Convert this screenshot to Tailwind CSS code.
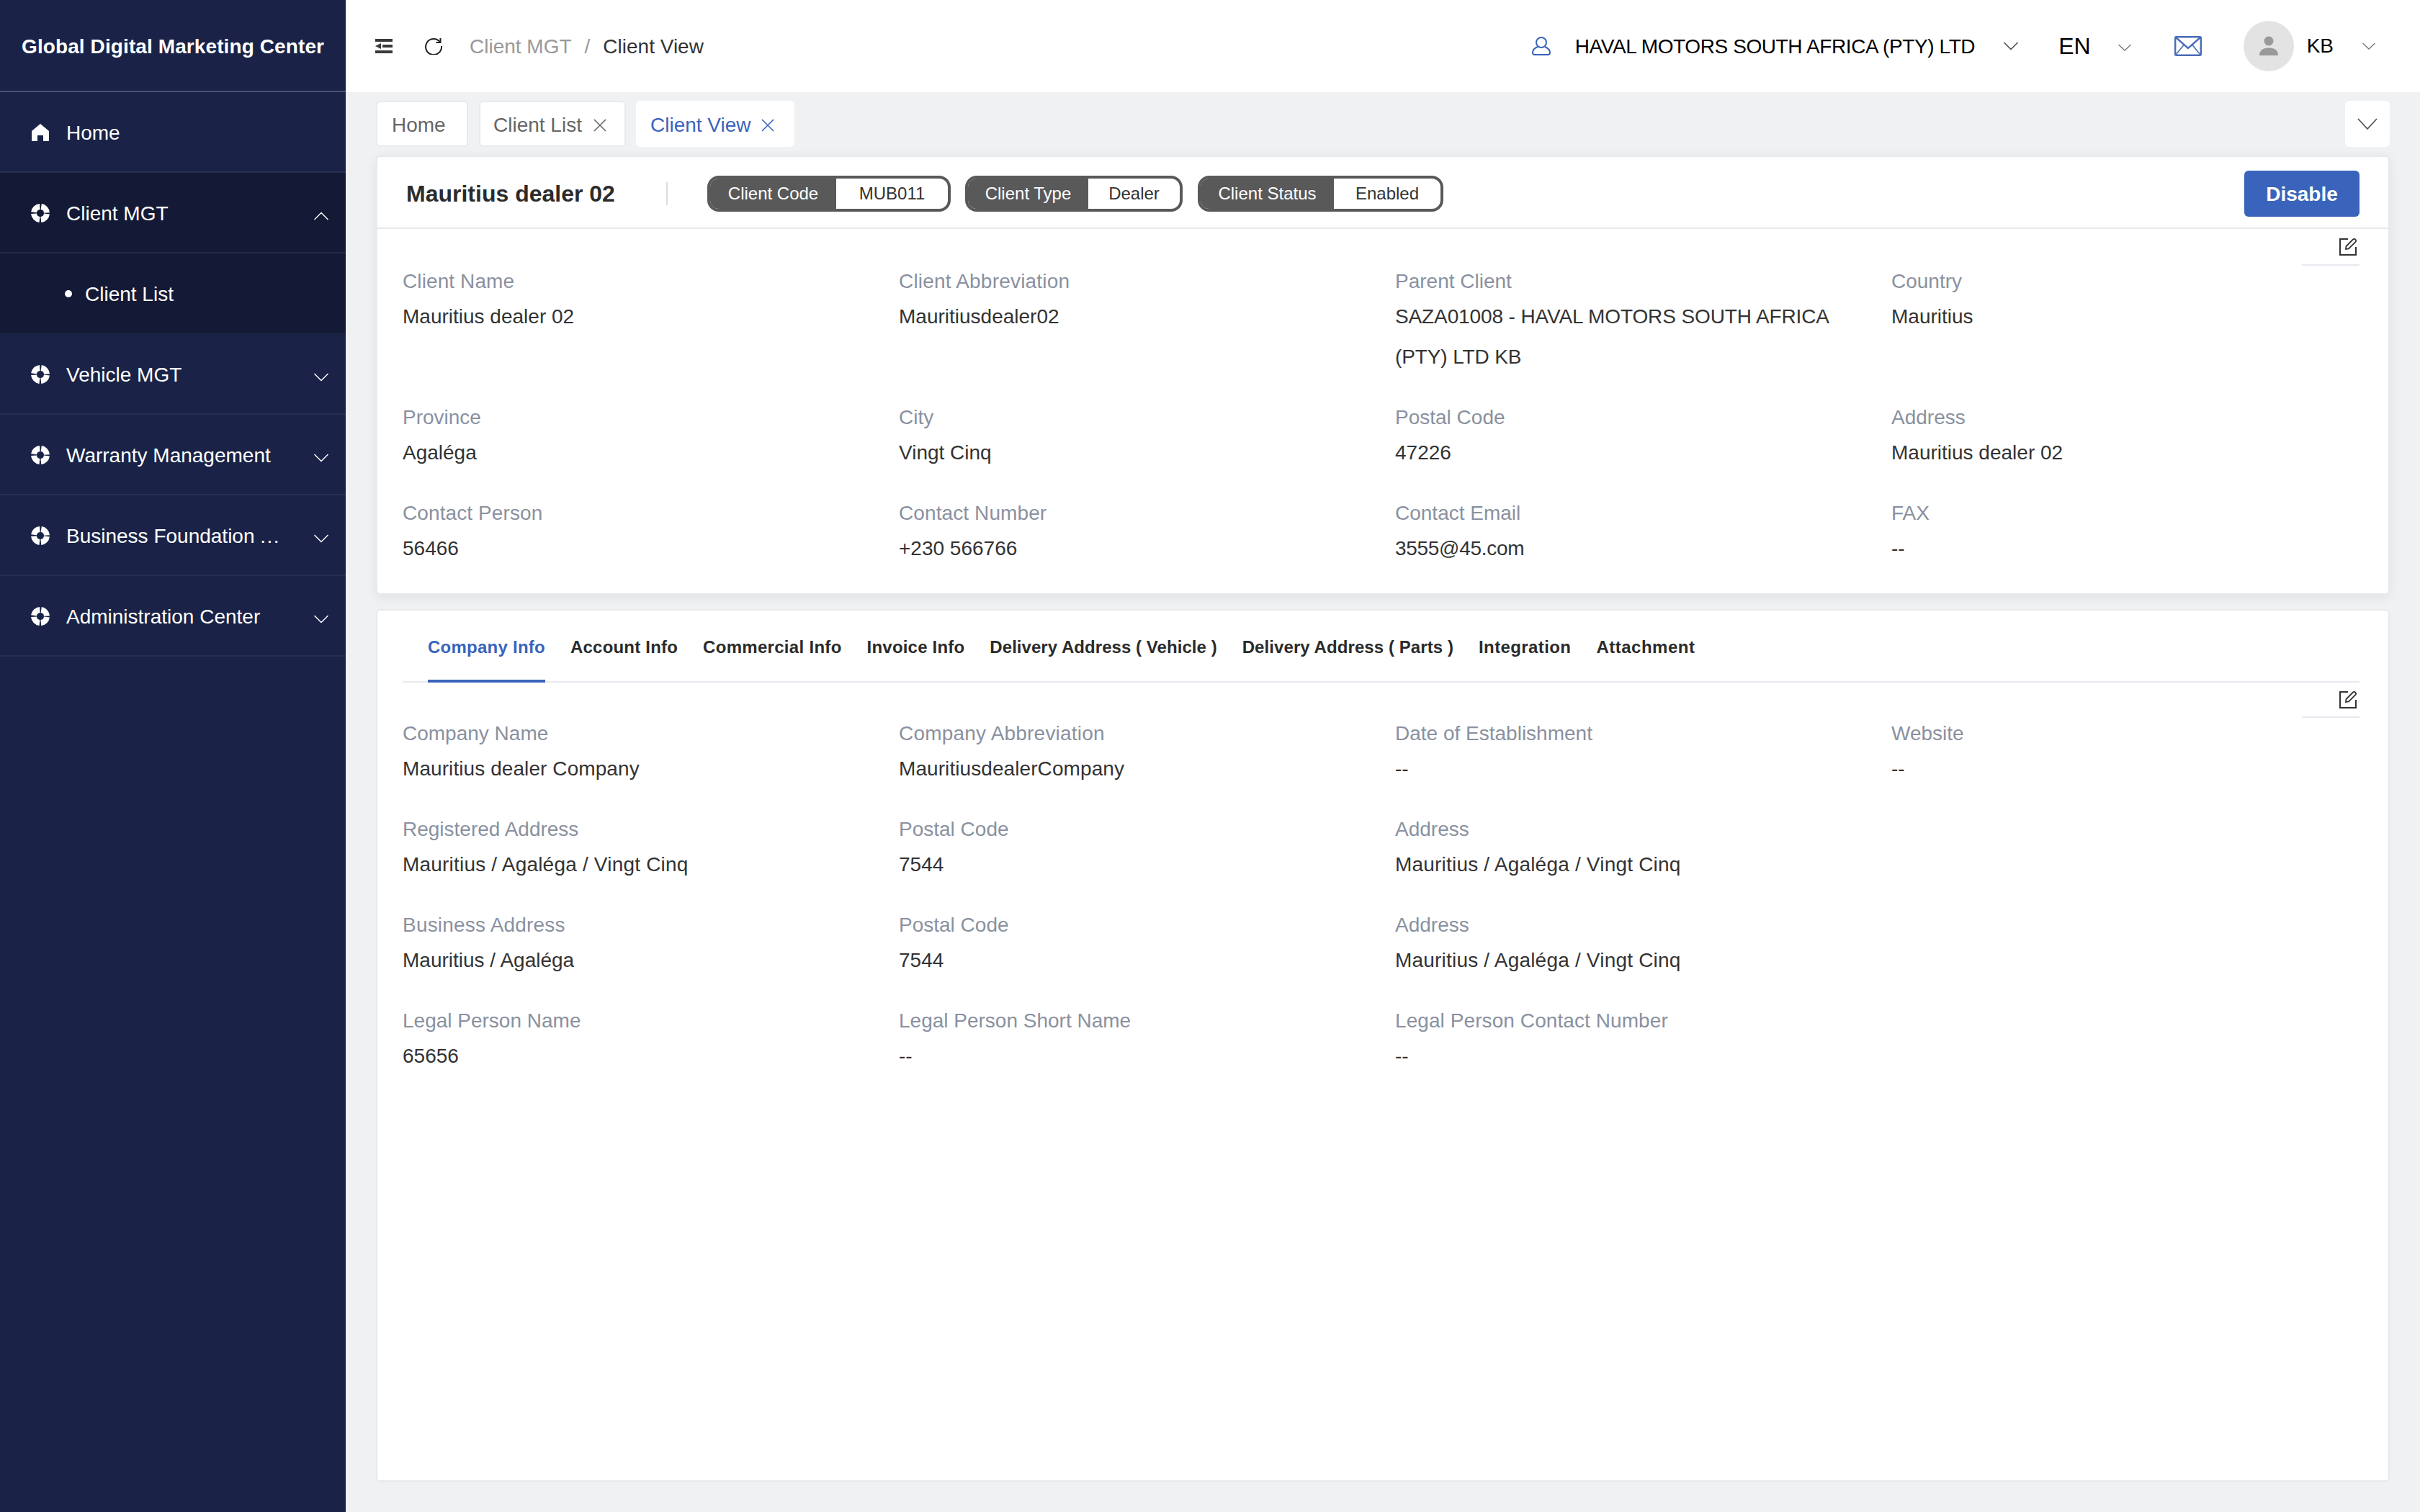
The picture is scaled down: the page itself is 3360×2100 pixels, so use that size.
<!DOCTYPE html>
<html lang="en">
<head>
    <meta charset="UTF-8">
    <title>Client View</title>
    <script src="https://cdn.jsdelivr.net/npm/@tailwindcss/browser@4"></script>
</head>
<body class="w-[3360px] h-[2100px] overflow-hidden flex bg-[#f0f1f3] font-['Liberation_Sans',sans-serif] text-[28px] text-[#333]">
    <!-- sidebar -->
    <aside class="w-[480px] h-full shrink-0 bg-[#1a2347] text-white">
        <div class="h-[128px] flex items-center pl-[30px] pt-[4px] border-b-2 border-[#4a5270] font-bold text-[28px] tracking-[0.1px]">Global Digital Marketing Center</div>
        <a class="h-[112px] flex items-center pl-[44px] pr-[24px] pt-[2px] border-b-2 border-[#262f50]">
            <svg class="w-[24px] h-[24px] mr-[24px]" viewBox="0 0 24 24" fill="#fff"><path d="M12 0 L24 10 V24 H16 V16 H8 V24 H0 V10 Z"/></svg>
            <span class="pt-[2px]">Home</span>
        </a>
        <a class="h-[112px] flex items-center pl-[43px] pr-[24px] pt-[2px] bg-[#141a35] border-b-2 border-[#232944]">
            <svg class="w-[26px] h-[26px] mr-[23px]" viewBox="0 0 26 26"><circle cx="13" cy="13" r="9" fill="none" stroke="#fff" stroke-width="8" stroke-dasharray="12.14 2" stroke-dashoffset="-1"/></svg>
            <span class="flex-1 pt-[2px]">Client MGT</span>
            <svg class="w-[20px] h-[12px] mt-[8px]" viewBox="0 0 20 12" fill="none" stroke="#fff" stroke-width="1.5"><path d="M0.5 11 L10 1.5 L19.5 11"/></svg>
        </a>
        <a class="h-[112px] flex items-center pl-[90px] pt-[2px] bg-[#141a35] border-b-2 border-[#1c2340]">
            <span class="w-[10px] h-[10px] rounded-full bg-white mr-[18px]"></span>
            <span class="pt-[2px]">Client List</span>
        </a>
        <a class="h-[112px] flex items-center pl-[43px] pr-[24px] pt-[2px] border-b-2 border-[#262f50]">
            <svg class="w-[26px] h-[26px] mr-[23px]" viewBox="0 0 26 26"><circle cx="13" cy="13" r="9" fill="none" stroke="#fff" stroke-width="8" stroke-dasharray="12.14 2" stroke-dashoffset="-1"/></svg>
            <span class="flex-1 pt-[2px]">Vehicle MGT</span>
            <svg class="w-[20px] h-[12px] mt-[8px]" viewBox="0 0 20 12" fill="none" stroke="#fff" stroke-width="1.5"><path d="M0.5 1 L10 10.5 L19.5 1"/></svg>
        </a>
        <a class="h-[112px] flex items-center pl-[43px] pr-[24px] pt-[2px] border-b-2 border-[#262f50]">
            <svg class="w-[26px] h-[26px] mr-[23px]" viewBox="0 0 26 26"><circle cx="13" cy="13" r="9" fill="none" stroke="#fff" stroke-width="8" stroke-dasharray="12.14 2" stroke-dashoffset="-1"/></svg>
            <span class="flex-1 pt-[2px]">Warranty Management</span>
            <svg class="w-[20px] h-[12px] mt-[8px]" viewBox="0 0 20 12" fill="none" stroke="#fff" stroke-width="1.5"><path d="M0.5 1 L10 10.5 L19.5 1"/></svg>
        </a>
        <a class="h-[112px] flex items-center pl-[43px] pr-[24px] pt-[2px] border-b-2 border-[#262f50]">
            <svg class="w-[26px] h-[26px] mr-[23px]" viewBox="0 0 26 26"><circle cx="13" cy="13" r="9" fill="none" stroke="#fff" stroke-width="8" stroke-dasharray="12.14 2" stroke-dashoffset="-1"/></svg>
            <span class="flex-1 pt-[2px]">Business Foundation <span class="tracking-[1.5px]">...</span></span>
            <svg class="w-[20px] h-[12px] mt-[8px]" viewBox="0 0 20 12" fill="none" stroke="#fff" stroke-width="1.5"><path d="M0.5 1 L10 10.5 L19.5 1"/></svg>
        </a>
        <a class="h-[112px] flex items-center pl-[43px] pr-[24px] pt-[2px] border-b-2 border-[#262f50]">
            <svg class="w-[26px] h-[26px] mr-[23px]" viewBox="0 0 26 26"><circle cx="13" cy="13" r="9" fill="none" stroke="#fff" stroke-width="8" stroke-dasharray="12.14 2" stroke-dashoffset="-1"/></svg>
            <span class="flex-1 pt-[2px]">Administration Center</span>
            <svg class="w-[20px] h-[12px] mt-[8px]" viewBox="0 0 20 12" fill="none" stroke="#fff" stroke-width="1.5"><path d="M0.5 1 L10 10.5 L19.5 1"/></svg>
        </a>
    </aside>

    <div class="flex-1 h-full flex flex-col min-w-0">
        <!-- header -->
        <header class="h-[128px] shrink-0 bg-white flex items-center">
            <svg class="w-[24px] h-[20px] ml-[41px]" viewBox="0 0 24 20" fill="#3a3a3a"><rect width="24" height="4"/><rect x="10" y="8" width="14" height="4"/><rect y="16" width="24" height="4"/><path d="M0 10 L8 6 V14 Z"/></svg>
            <svg class="w-[24px] h-[24px] ml-[45px]" viewBox="0 0 24 24" fill="none" stroke="#222" stroke-width="2"><path d="M20.5 6 A11 11 0 1 0 23 12"/><path d="M21.5 1 V7 H15.5" stroke-width="2"/></svg>
            <span class="ml-[38px] pt-[2px] text-[#999]">Client MGT</span>
            <span class="mx-[18px] pt-[2px] text-[#999]">/</span>
            <span class="pt-[2px] text-[#333]">Client View</span>

            <svg class="w-[26px] h-[26px] ml-auto" viewBox="0 0 26 26" fill="none" stroke="#3a64bb" stroke-width="2"><circle cx="13" cy="8" r="7"/><path d="M8 14 C3 16 1 19 1 22 C1 24 2 25 4 25 H22 C24 25 25 24 25 22 C25 19 23 16 18 14"/></svg>
            <span class="ml-[34px] pt-[2px] text-black tracking-[-0.4px]">HAVAL MOTORS SOUTH AFRICA (PTY) LTD</span>
            <svg class="w-[20px] h-[12px] ml-[40px]" viewBox="0 0 20 12" fill="none" stroke="#444" stroke-width="1.5"><path d="M0.5 1 L10 10.5 L19.5 1"/></svg>
            <span class="ml-[56px] text-[32px] text-black">EN</span>
            <svg class="w-[18px] h-[10px] ml-[38px] mt-[4px]" viewBox="0 0 18 10" fill="none" stroke="#777" stroke-width="1.3"><path d="M0.5 1 L9 9 L17.5 1"/></svg>
            <svg class="w-[38px] h-[28px] ml-[60px]" viewBox="0 0 38 28" fill="none" stroke="#4a6cb8" stroke-width="2.4"><rect x="1.2" y="1.2" width="35.6" height="25.6" rx="1.5"/><path d="M2 2 L19 17 L36 2"/><path d="M2 26 L13 12.5 M36 26 L25 12.5" stroke-width="1.6"/></svg>
            <span class="w-[70px] h-[70px] ml-[58px] rounded-full bg-[#e3e3e3] flex items-center justify-center">
                <svg class="w-[28px] h-[28px]" viewBox="0 0 28 28" fill="#999"><circle cx="14" cy="7" r="6.5"/><path d="M1 27 C1 19 7 16.5 14 16.5 C21 16.5 27 19 27 27 Z"/></svg>
            </span>
            <span class="ml-[18px] text-black">KB</span>
            <svg class="w-[18px] h-[10px] ml-[40px] mr-[62px]" viewBox="0 0 18 10" fill="none" stroke="#777" stroke-width="1.3"><path d="M0.5 1 L9 9 L17.5 1"/></svg>
        </header>

        <main class="flex-1 flex flex-col px-[42px] pb-[42px] min-h-0">
            <!-- open tabs -->
            <div class="h-[88px] shrink-0 pt-[12px] flex items-start">
                <div class="h-[64px] w-[128px] pl-[20px] pt-[4px] flex items-center bg-white border-2 border-[#e9eaed] rounded-[6px] text-[#666]">Home</div>
                <div class="h-[64px] w-[204px] ml-[15px] flex items-center pl-[18px] pt-[4px] bg-white border-2 border-[#e9eaed] rounded-[6px] text-[#666]">
                    <span>Client List</span>
                    <svg class="w-[18px] h-[18px] ml-[16px]" viewBox="0 0 18 18" stroke="#666" stroke-width="1.6"><path d="M1 1 L17 17 M17 1 L1 17"/></svg>
                </div>
                <div class="h-[64px] w-[220px] ml-[14px] flex items-center pl-[20px] pt-[4px] bg-white rounded-[6px] text-[#3a64bb]">
                    <span>Client View</span>
                    <svg class="w-[18px] h-[18px] ml-[14px]" viewBox="0 0 18 18" stroke="#3a64bb" stroke-width="1.6"><path d="M1 1 L17 17 M17 1 L1 17"/></svg>
                </div>
                <div class="h-[64px] w-[62px] ml-auto flex items-center justify-center bg-white rounded-[6px]">
                    <svg class="w-[28px] h-[16px]" viewBox="0 0 28 16" fill="none" stroke="#555" stroke-width="1.8"><path d="M1 1 L14 15 L27 1"/></svg>
                </div>
            </div>

            <!-- client card -->
            <section class="h-[610px] shrink-0 bg-white border-2 border-[#e8e9ed] rounded-[6px] shadow-[0_4px_16px_rgba(0,0,0,0.07)]">
                <div class="h-[100px] flex items-center border-b-2 border-[#e8e8ee] pl-[40px] pr-[40px] pt-[4px]">
                    <h1 class="w-[361px] text-[32px] font-bold text-[#2b2b2b]">Mauritius dealer 02</h1>
                    <span class="w-[2px] h-[32px] bg-[#dcdde1] mr-[55px]"></span>
                    <div class="h-[50px] flex items-stretch border-4 border-[#595959] rounded-[16px] text-[24px] bg-white overflow-hidden">
                        <span class="w-[175px] bg-[#595959] text-white flex items-center justify-center">Client Code</span>
                        <span class="w-[155px] flex items-center justify-center">MUB011</span>
                    </div>
                    <div class="h-[50px] ml-[20px] flex items-stretch border-4 border-[#595959] rounded-[16px] text-[24px] bg-white overflow-hidden">
                        <span class="w-[167px] bg-[#595959] text-white flex items-center justify-center">Client Type</span>
                        <span class="w-[127px] flex items-center justify-center">Dealer</span>
                    </div>
                    <div class="h-[50px] ml-[21px] flex items-stretch border-4 border-[#595959] rounded-[16px] text-[24px] bg-white overflow-hidden">
                        <span class="w-[185px] bg-[#595959] text-white flex items-center justify-center">Client Status</span>
                        <span class="w-[148px] flex items-center justify-center">Enabled</span>
                    </div>
                    <button class="w-[160px] h-[64px] ml-auto pt-[2px] bg-[#3a64bb] text-white rounded-[6px] text-[28px] font-bold">Disable</button>
                </div>
                <div class="flex justify-end pr-[40px]">
                    <div class="w-[80px] h-[51px] pt-[13px] pl-[52px] border-b-2 border-[#e8e8ee]">
                        <svg class="w-[24px] h-[24px]" viewBox="0 0 24 24" fill="none" stroke="#333" stroke-width="2"><path d="M12 1 H1 V23 H23 V12"/><path d="M9 15 L9.5 11 L19 1.5 C20 0.8 21.5 0.8 22.3 1.7 C23.2 2.6 23.2 4 22.5 5 L13 14.5 Z" stroke-width="1.8"/></svg>
                    </div>
                </div>
                <div class="pl-[35px] pt-[1px] grid grid-cols-[repeat(4,689px)] gap-y-[35px]">
                    <div><div class="h-[42px] leading-[42px] text-[#8a919f] tracking-[0.1px]">Client Name</div><div class="leading-[56px]">Mauritius dealer 02</div></div>
                    <div><div class="h-[42px] leading-[42px] text-[#8a919f] tracking-[0.2px]">Client Abbreviation</div><div class="leading-[56px]">Mauritiusdealer02</div></div>
                    <div><div class="h-[42px] leading-[42px] text-[#8a919f]">Parent Client</div><div class="leading-[56px] pr-[60px] tracking-[-0.12px]">SAZA01008 - HAVAL MOTORS SOUTH AFRICA (PTY) LTD KB</div></div>
                    <div><div class="h-[42px] leading-[42px] text-[#8a919f]">Country</div><div class="leading-[56px]">Mauritius</div></div>
                    <div><div class="h-[42px] leading-[42px] text-[#8a919f]">Province</div><div class="leading-[56px]">Agaléga</div></div>
                    <div><div class="h-[42px] leading-[42px] text-[#8a919f]">City</div><div class="leading-[56px]">Vingt Cinq</div></div>
                    <div><div class="h-[42px] leading-[42px] text-[#8a919f]">Postal Code</div><div class="leading-[56px]">47226</div></div>
                    <div><div class="h-[42px] leading-[42px] text-[#8a919f]">Address</div><div class="leading-[56px]">Mauritius dealer 02</div></div>
                    <div><div class="h-[42px] leading-[42px] text-[#8a919f] tracking-[0.1px]">Contact Person</div><div class="leading-[56px]">56466</div></div>
                    <div><div class="h-[42px] leading-[42px] text-[#8a919f] tracking-[0.1px]">Contact Number</div><div class="leading-[56px]">+230 566766</div></div>
                    <div><div class="h-[42px] leading-[42px] text-[#8a919f]">Contact Email</div><div class="leading-[56px] tracking-[-0.3px]">3555@45.com</div></div>
                    <div><div class="h-[42px] leading-[42px] text-[#8a919f]">FAX</div><div class="leading-[56px]">--</div></div>
                </div>
            </section>

            <!-- detail card -->
            <section class="flex-1 mt-[20px] bg-white border-2 border-[#e8e9ed] rounded-[6px]">
                <div class="h-[100px] mx-[35px] mr-[40px] pl-[35px] flex gap-[35px] border-b-2 border-[#e8e8ee] text-[24px] font-bold text-[#2b2b2b]">
                    <a class="h-[100px] pt-[6px] flex items-center border-b-4 border-[#3a64bb] text-[#3a64bb] tracking-[0.25px]">Company Info</a>
                    <a class="h-[100px] pt-[6px] flex items-center border-b-4 border-transparent tracking-[0.2px]">Account Info</a>
                    <a class="h-[100px] pt-[6px] flex items-center border-b-4 border-transparent tracking-[0.3px]">Commercial Info</a>
                    <a class="h-[100px] pt-[6px] flex items-center border-b-4 border-transparent tracking-[0.2px]">Invoice Info</a>
                    <a class="h-[100px] pt-[6px] flex items-center border-b-4 border-transparent tracking-[0.05px]">Delivery Address ( Vehicle )</a>
                    <a class="h-[100px] pt-[6px] flex items-center border-b-4 border-transparent tracking-[0.08px]">Delivery Address ( Parts )</a>
                    <a class="h-[100px] pt-[6px] flex items-center border-b-4 border-transparent tracking-[0.4px]">Integration</a>
                    <a class="h-[100px] pt-[6px] flex items-center border-b-4 border-transparent tracking-[0.5px]">Attachment</a>
                </div>
                <div class="flex justify-end pr-[40px]">
                    <div class="w-[80px] h-[49px] pt-[12px] pl-[52px] border-b-2 border-[#e8e8ee]">
                        <svg class="w-[24px] h-[24px]" viewBox="0 0 24 24" fill="none" stroke="#333" stroke-width="2"><path d="M12 1 H1 V23 H23 V12"/><path d="M9 15 L9.5 11 L19 1.5 C20 0.8 21.5 0.8 22.3 1.7 C23.2 2.6 23.2 4 22.5 5 L13 14.5 Z" stroke-width="1.8"/></svg>
                    </div>
                </div>
                <div class="pl-[35px] pt-[1px] grid grid-cols-[repeat(4,689px)] gap-y-[35px]">
                    <div><div class="h-[42px] leading-[42px] text-[#8a919f]">Company Name</div><div class="leading-[56px] tracking-[0.08px]">Mauritius dealer Company</div></div>
                    <div><div class="h-[42px] leading-[42px] text-[#8a919f] tracking-[0.2px]">Company Abbreviation</div><div class="leading-[56px] tracking-[0.08px]">MauritiusdealerCompany</div></div>
                    <div><div class="h-[42px] leading-[42px] text-[#8a919f]">Date of Establishment</div><div class="leading-[56px]">--</div></div>
                    <div><div class="h-[42px] leading-[42px] text-[#8a919f]">Website</div><div class="leading-[56px]">--</div></div>
                    <div><div class="h-[42px] leading-[42px] text-[#8a919f]">Registered Address</div><div class="leading-[56px] tracking-[0.2px]">Mauritius / Agaléga / Vingt Cinq</div></div>
                    <div><div class="h-[42px] leading-[42px] text-[#8a919f]">Postal Code</div><div class="leading-[56px]">7544</div></div>
                    <div class="col-span-2"><div class="h-[42px] leading-[42px] text-[#8a919f]">Address</div><div class="leading-[56px] tracking-[0.2px]">Mauritius / Agaléga / Vingt Cinq</div></div>
                    <div><div class="h-[42px] leading-[42px] text-[#8a919f] tracking-[0.2px]">Business Address</div><div class="leading-[56px]">Mauritius / Agaléga</div></div>
                    <div><div class="h-[42px] leading-[42px] text-[#8a919f]">Postal Code</div><div class="leading-[56px]">7544</div></div>
                    <div class="col-span-2"><div class="h-[42px] leading-[42px] text-[#8a919f]">Address</div><div class="leading-[56px] tracking-[0.2px]">Mauritius / Agaléga / Vingt Cinq</div></div>
                    <div><div class="h-[42px] leading-[42px] text-[#8a919f]">Legal Person Name</div><div class="leading-[56px]">65656</div></div>
                    <div><div class="h-[42px] leading-[42px] text-[#8a919f]">Legal Person Short Name</div><div class="leading-[56px]">--</div></div>
                    <div class="col-span-2"><div class="h-[42px] leading-[42px] text-[#8a919f] tracking-[0.08px]">Legal Person Contact Number</div><div class="leading-[56px]">--</div></div>
                </div>
            </section>
        </main>
    </div>
</body>
</html>
